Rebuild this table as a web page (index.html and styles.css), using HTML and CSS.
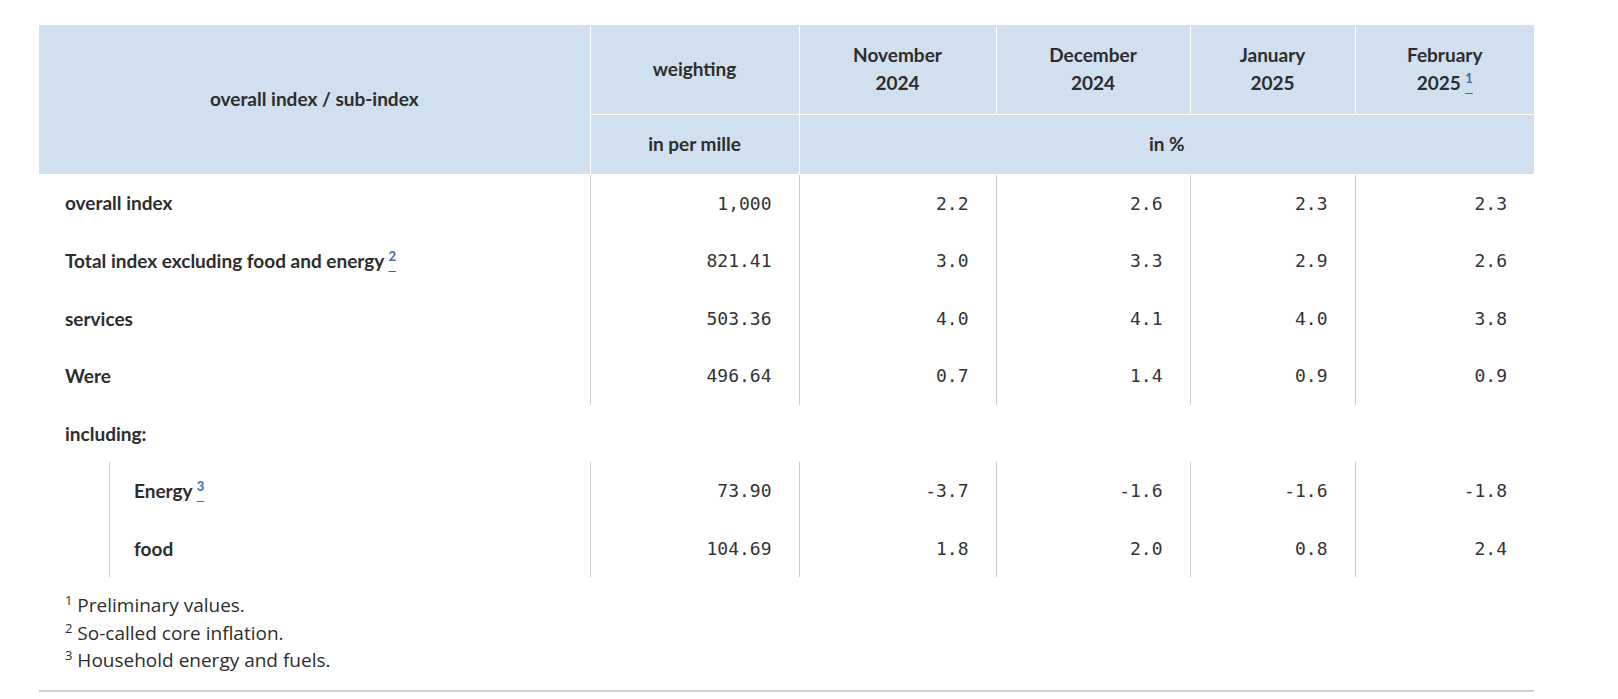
FILE: index.html
```html
<!DOCTYPE html>
<html lang="en">
<head>
<meta charset="utf-8">
<title>Consumer price index</title>
<link rel="stylesheet" href="styles.css">
</head>
<body>
<div class="page">
  <table class="cpi">
    <colgroup>
      <col class="c-label">
      <col class="c-weight">
      <col class="c-nov">
      <col class="c-dec">
      <col class="c-jan">
      <col class="c-feb">
    </colgroup>
    <thead>
      <tr class="head-top">
        <th rowspan="2" class="h-label">overall index / sub-index</th>
        <th>weighting</th>
        <th>November<br>2024</th>
        <th>December<br>2024</th>
        <th>January<br>2025</th>
        <th>February<br>2025 <a class="fnref" href="#fn1"><sup>1</sup></a></th>
      </tr>
      <tr class="head-unit">
        <th>in per mille</th>
        <th colspan="4">in %</th>
      </tr>
    </thead>
    <tbody>
      <tr>
        <th class="label">overall index</th>
        <td>1,000</td><td>2.2</td><td>2.6</td><td>2.3</td><td>2.3</td>
      </tr>
      <tr>
        <th class="label">Total index excluding food and energy <a class="fnref" href="#fn2"><sup>2</sup></a></th>
        <td>821.41</td><td>3.0</td><td>3.3</td><td>2.9</td><td>2.6</td>
      </tr>
      <tr>
        <th class="label">services</th>
        <td>503.36</td><td>4.0</td><td>4.1</td><td>4.0</td><td>3.8</td>
      </tr>
      <tr>
        <th class="label">Were</th>
        <td>496.64</td><td>0.7</td><td>1.4</td><td>0.9</td><td>0.9</td>
      </tr>
      <tr class="group">
        <th class="label" colspan="6">including:</th>
      </tr>
      <tr>
        <th class="label nested"><div class="indent">Energy <a class="fnref" href="#fn3"><sup>3</sup></a></div></th>
        <td>73.90</td><td>-3.7</td><td>-1.6</td><td>-1.6</td><td>-1.8</td>
      </tr>
      <tr>
        <th class="label nested"><div class="indent">food</div></th>
        <td>104.69</td><td>1.8</td><td>2.0</td><td>0.8</td><td>2.4</td>
      </tr>
    </tbody>
  </table>
  <ol class="notes">
    <li id="fn1"><sup>1</sup> Preliminary values.</li>
    <li id="fn2"><sup>2</sup> So-called core inflation.</li>
    <li id="fn3"><sup>3</sup> Household energy and fuels.</li>
  </ol>
  <hr class="rule">
</div>
</body>
</html>
```

FILE: styles.css
```css
html, body {
  margin: 0;
  padding: 0;
  background: #ffffff;
}

body {
  color: #2d2d2d;
  font-family: "Lato", "Open Sans", sans-serif;
}

.page {
  width: 1495px;
  padding: 25px 0 0 39px;
}

.cpi {
  width: 1495px;
  table-layout: fixed;
  border-collapse: collapse;
  border-spacing: 0;
}

.c-label { width: 551px; }
.c-weight { width: 209px; }
.c-nov { width: 197px; }
.c-dec { width: 194px; }
.c-jan { width: 165px; }
.c-feb { width: 179px; }

/* header */
.cpi thead th {
  background: #d1e0ee;
  font-weight: 700;
  font-size: 19px;
  line-height: 28.5px;
  text-align: center;
  vertical-align: middle;
  border-left: 1px solid #ffffff;
  padding: 0 8px;
}

.cpi thead th.h-label {
  border-left: none;
}

.head-top th {
  height: 89px;
  box-sizing: border-box;
  padding-top: 2px;
}

.head-unit th {
  height: 59px;
  border-top: 1px solid #ffffff;
}

.cpi thead th.h-label {
  border-top: none;
}

/* body */
.cpi tbody th.label {
  text-align: left;
  font-weight: 700;
  font-size: 19px;
  line-height: 27.5px;
  padding: 15px 10px 15px 26px;
  vertical-align: middle;
}

.cpi tbody td {
  font-family: "DejaVu Sans Mono", "Liberation Mono", monospace;
  font-size: 18px;
  line-height: 27.5px;
  text-align: right;
  padding: 15px 27px 15px 10px;
  border-left: 1px solid #cccccc;
  vertical-align: middle;
  color: #333333;
}

.cpi tbody tr:first-child td {
  border-top: 1px solid #ffffff;
}

.cpi tbody th.nested {
  padding: 0;
}

.indent {
  margin-left: 70px;
  border-left: 1px solid #cccccc;
  padding: 15px 0 15px 24px;
}

/* footnote references */
.fnref {
  color: #3a6db3;
  text-decoration: underline;
  text-underline-offset: 3px;
}

.fnref sup {
  font-size: 13px;
  line-height: 0;
  vertical-align: 7px;
  font-weight: 700;
}

/* footnotes */
.notes {
  list-style: none;
  margin: 15px 0 0 0;
  padding: 0 0 0 26px;
  font-family: "Open Sans", "Lato", sans-serif;
  font-size: 19px;
  line-height: 27.5px;
  color: #2d2d2d;
}

.notes sup {
  font-size: 13px;
  line-height: 0;
  vertical-align: 7px;
}

.rule {
  margin: 15px 0 0 0;
  border: none;
  border-top: 2px solid #cfcfcf;
  height: 0;
}
```
